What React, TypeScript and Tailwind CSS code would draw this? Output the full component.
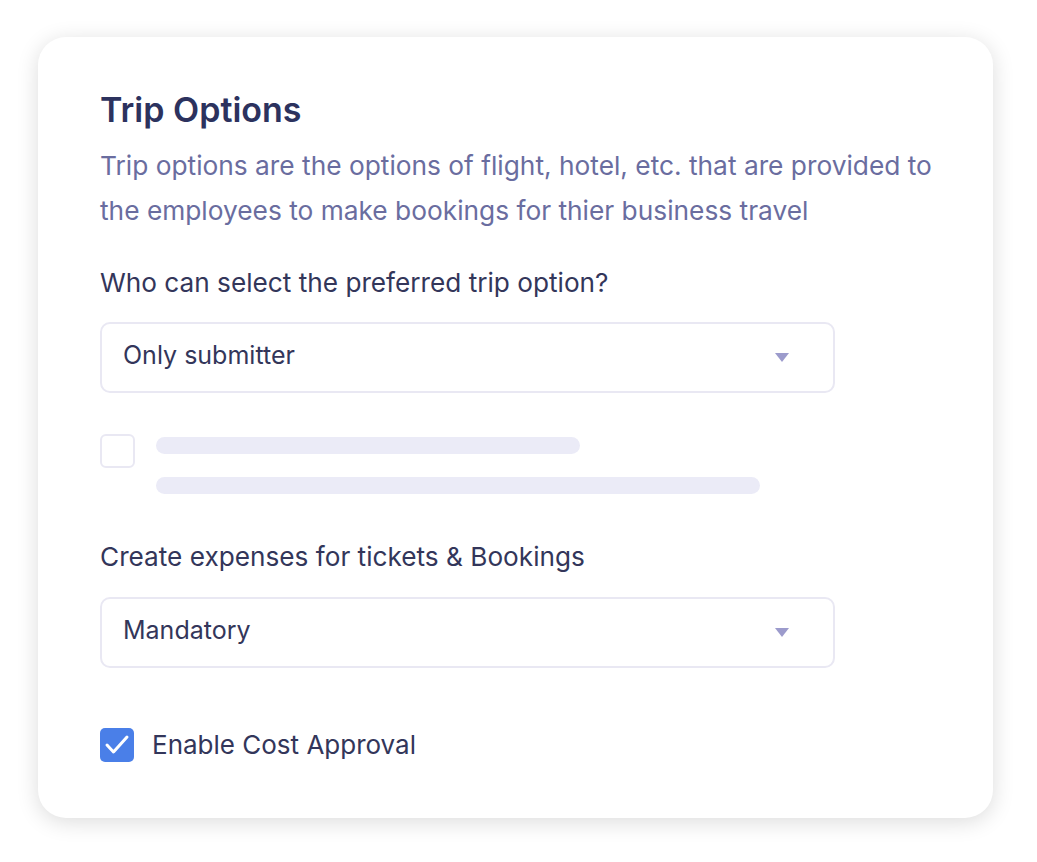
import React from "react";

function Caret() {
  return (
    <svg width="14" height="9" viewBox="0 0 14 9" className="mt-[4px] shrink-0">
      <path d="M0 0 H14 L7 9 Z" fill="#9c9bcc" />
    </svg>
  );
}

function Select({ value }: { value: string }) {
  return (
    <div className="flex h-[71px] w-[735px] items-center justify-between rounded-[10px] border-2 border-[#e9e8f3] pb-[5px] pl-[21px] pr-[44px]">
      <span className="text-[25px] leading-[34px] text-[#33365a]">{value}</span>
      <Caret />
    </div>
  );
}

export default function App() {
  return (
    <div
      className="min-h-[862px] w-full bg-white pl-[38px] pt-[37px]"
      style={{ fontFamily: "Inter, 'Noto Sans', sans-serif" }}
    >
      <div className="h-[781px] w-[955px] rounded-[28px] bg-white pl-[62px] pt-[51px] shadow-[0_4px_22px_rgba(0,0,0,0.14)]">
        <h1 className="text-[34px] font-semibold leading-[44px] text-[#2c325e]">Trip Options</h1>
        <p className="mt-[11px] w-[850px] text-[26.3px] leading-[45px] text-[#6a6d9f]">
          Trip options are the options of flight, hotel, etc. that are provided to the employees to make bookings for thier business travel
        </p>
        <div className="mt-[33px] text-[26.2px] leading-[34px] text-[#33365a]">
          Who can select the preferred trip option?
        </div>
        <div className="mt-[22px]">
          <Select value="Only submitter" />
        </div>
        <div className="mt-[41px] flex gap-[21px]">
          <div className="h-[34px] w-[35px] rounded-[6px] border-2 border-[#e9e8f3]" />
          <div className="flex flex-col gap-[23px] pt-[3px]">
            <div className="h-[17px] w-[424px] rounded-full bg-[#ebebf7]" />
            <div className="h-[17px] w-[604px] rounded-full bg-[#ebebf7]" />
          </div>
        </div>
        <div className="mt-[46px] text-[26.2px] leading-[34px] text-[#33365a]">
          Create expenses for tickets &amp; Bookings
        </div>
        <div className="mt-[23px]">
          <Select value="Mandatory" />
        </div>
        <div className="mt-[60px] flex items-center gap-[18px]">
          <div className="h-[34px] w-[34px] rounded-[5px] bg-[#4a7fe8]">
            <svg width="34" height="34" viewBox="0 0 34 34">
              <path d="M7 17 L13.5 24 L27 9" fill="none" stroke="white" strokeWidth="3" strokeLinecap="round" strokeLinejoin="round" />
            </svg>
          </div>
          <span className="text-[26px] leading-[34px] text-[#33365a]">Enable Cost Approval</span>
        </div>
      </div>
    </div>
  );
}
